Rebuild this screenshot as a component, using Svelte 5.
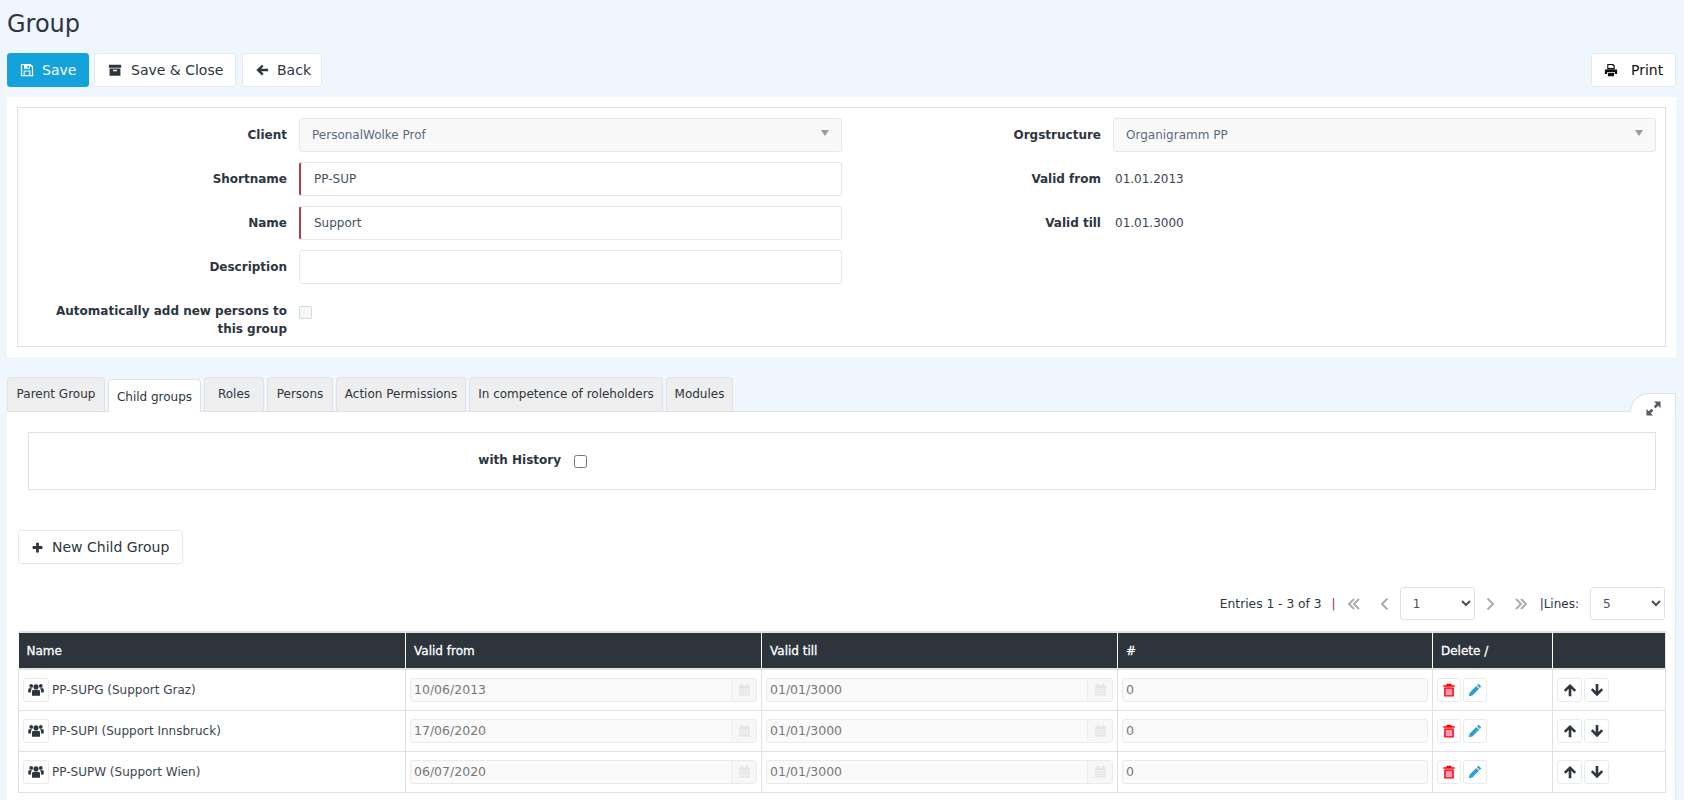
<script>
  const tabs = [
    { label: 'Parent Group', width: 98 },
    { label: 'Child groups', width: 93 },
    { label: 'Roles', width: 60 },
    { label: 'Persons', width: 66 },
    { label: 'Action Permissions', width: 130 },
    { label: 'In competence of roleholders', width: 194 },
    { label: 'Modules', width: 67 }
  ]

  const rows = [
    { name: 'PP-SUPG (Support Graz)', from: '10/06/2013', till: '01/01/3000' },
    { name: 'PP-SUPI (Support Innsbruck)', from: '17/06/2020', till: '01/01/3000' },
    { name: 'PP-SUPW (Support Wien)', from: '06/07/2020', till: '01/01/3000' }
  ]

  // simple filled shapes, all on a 16 x 16 box
  const icons = {
    save: 'M1 1h11l3 3v11H1zM2.400 2.400v11.200h1.700V8.500h7.800v5.100h1.700V4.800L11.500 2.800v3.900H4.500V2.400zM8.300 3v2.600h1.800V3zM5.400 9.800v3.800h5.200V9.800z',
    box: 'M1 2h14v3.400H1zM1.800 6.400h12.400V14.500H1.800zM5.800 7.800v1.500h4.400V7.800z',
    left: 'M8 2l1.800 1.800L7 6.700H15v2.800H7l2.800 2.800L8 14.200 1.500 8.100z',
    print: 'M3.700 1h6.800l1.800 1.800V7H3.700zM5 2.300v3.500h6V3.500H9.700V2.300zM1 7.500h14V12.500h-2.500v-2H3.500v2H1zM4.500 11.500h7V15h-7z',
    plus: 'M6.300 2h3.400v4.300H14v3.400H9.700V14H6.300V9.700H2V6.300h4.300z',
    up: 'M8 1l7 7-2 2-3.500-3.500V15h-3V6.500L3 10 1 8z',
    down: 'M8 15L1 8l2-2 3.500 3.500V1h3v8.500L13 6l2 2z',
    pencil: 'M12 .8l3.200 3.200-1.800 1.800-3.200-3.200zM9.400 3.400l3.200 3.200-7.600 7.600-4.200 1 1-4.200z',
    expand: 'M8.500 .5h7v7l-2.500-2.500-2.800 2.800-2-2 2.800-2.800zM.5 15.500v-7l2.500 2.500 2.800-2.800 2 2-2.800 2.800 2.500 2.500z',
    calendar: 'M1.500 3h2.500V1h2v2h4V1h2v2h2.500v12.500h-13zM3 6.500V8h2.500V6.500zM6.800 6.500V8h2.400V6.500zM10.500 6.500V8H13V6.500zM3 9.300v1.500h2.500V9.300zM6.800 9.300v1.500h2.400V9.300zM10.500 9.300v1.500H13V9.300zM3 12v1.500h2.500V12zM6.800 12v1.500h2.400V12zM10.500 12v1.500H13V12z'
  }
</script>

{#snippet icon(name, cls = '')}
  <svg class="icon {cls}" viewBox="0 0 16 16" aria-hidden="true"><path fill-rule="evenodd" d={icons[name]} /></svg>
{/snippet}

{#snippet users()}
  <svg class="icon" viewBox="0 0 18 16" aria-hidden="true">
    <circle cx="9" cy="5" r="2.9" />
    <circle cx="3.600" cy="4" r="2.100" />
    <circle cx="14.400" cy="4" r="2.100" />
    <path d="M4.500 9.500c.8-.9 2-1.200 4.500-1.200s3.700.3 4.500 1.200v5.500H4.500zM.3 7.500C.8 6.800 1.800 6.700 3.400 6.700c.6 0 1 .1 1.400.3-.7.500-1.300 1.200-1.400 2.300v2H.3zM17.700 7.500c-.5-.7-1.500-.8-3.100-.8-.6 0-1 .1-1.400.3.700.5 1.300 1.200 1.400 2.300v2h3.100z" />
  </svg>
{/snippet}

{#snippet trash()}
  <svg class="icon" viewBox="0 0 16 16" aria-hidden="true">
    <rect x="3.500" y="5" width="9" height="9.500" fill="#f79ab8" />
    <path fill="#f00" fill-rule="evenodd" d="M5.500 .8h5l.7 1.700H14.500v1.800h-13V2.500h3.300zM2.500 5h11v10.500h-11zM4.200 6.600v7.300h7.600V6.600z" />
  </svg>
{/snippet}

<main>
  <h1>Group</h1>

  <div class="toolbar">
    <button class="btn primary">{@render icon('save')}Save</button>
    <button class="btn close">{@render icon('box')}Save &amp; Close</button>
    <button class="btn back">{@render icon('left')}Back</button>
    <button class="btn print">{@render icon('print')}Print</button>
  </div>

  <section class="card">
    <div class="fieldset form">
      <span class="lbl">Client</span>
      <div class="ctl disabled">PersonalWolke Prof<i class="caret"></i></div>
      <span class="lbl">Orgstructure</span>
      <div class="ctl disabled">Organigramm PP<i class="caret"></i></div>

      <span class="lbl">Shortname</span>
      <div class="ctl required">PP-SUP</div>
      <span class="lbl">Valid from</span>
      <div class="plain">01.01.2013</div>

      <span class="lbl">Name</span>
      <div class="ctl required">Support</div>
      <span class="lbl">Valid till</span>
      <div class="plain">01.01.3000</div>

      <span class="lbl">Description</span>
      <div class="ctl"></div>
      <span></span><span></span>

      <span class="lbl multi">Automatically add new persons to this group</span>
      <div class="checkrow"><i class="fakecheck"></i></div>
    </div>
  </section>

  <div class="tabs">
    {#each tabs as t, i}
      <div class="tab" class:active={i === 1} style="width:{t.width}px">{t.label}</div>
    {/each}
    <div class="corner">{@render icon('expand')}</div>
  </div>

  <section class="tabpanel">
    <div class="fieldset history">
      <span class="lbl">with History</span>
      <input type="checkbox" />
    </div>

    <button class="btn newchild">{@render icon('plus')}New Child Group</button>

    <div class="pager">
      <span class="entries">Entries 1 - 3 of 3</span>
      <span class="sep">|</span>
      <svg class="chev first" viewBox="0 0 14 14"><path d="M7 2L2 7l5 5M12 2L7 7l5 5" /></svg>
      <svg class="chev prev" viewBox="0 0 14 14"><path d="M9.500 1.500L4 7l5.500 5.500" /></svg>
      <select><option>1</option></select>
      <svg class="chev next" viewBox="0 0 14 14"><path d="M4.500 1.500L10 7l-5.500 5.500" /></svg>
      <svg class="chev last" viewBox="0 0 14 14"><path d="M2 2l5 5-5 5M7 2l5 5-5 5" /></svg>
      <span class="lines">|Lines:</span>
      <select><option>5</option></select>
    </div>

    <table>
      <colgroup>
        <col style="width:387px" /><col style="width:356px" /><col style="width:356px" />
        <col style="width:315px" /><col style="width:120px" /><col />
      </colgroup>
      <thead>
        <tr><th>Name</th><th>Valid from</th><th>Valid till</th><th>#</th><th>Delete /</th><th></th></tr>
      </thead>
      <tbody>
        {#each rows as r}
          <tr>
            <td>
              <div class="namewrap">
                <span class="mini users">{@render users()}</span>
                <span class="rowname">{r.name}</span>
              </div>
            </td>
            <td><div class="date"><span>{r.from}</span><b>{@render icon('calendar')}</b></div></td>
            <td><div class="date"><span>{r.till}</span><b>{@render icon('calendar')}</b></div></td>
            <td><div class="num">0</div></td>
            <td>
              <div class="acts">
                <span class="mini">{@render trash()}</span>
                <span class="mini">{@render icon('pencil', 'blue')}</span>
              </div>
            </td>
            <td>
              <div class="acts">
                <span class="mini arrow">{@render icon('up')}</span>
                <span class="mini arrow">{@render icon('down')}</span>
              </div>
            </td>
          </tr>
        {/each}
      </tbody>
    </table>
  </section>
</main>

<style>
  :global(body) {
    background: #eff6fe;
  }

  main {
    height: 800px;
    overflow: hidden;
    padding: 0 8px 0 7px;
    box-sizing: border-box;
    font: 12px/18px "DejaVu Sans", Verdana, sans-serif;
    color: #2d3540;
  }

  h1 {
    margin: 0;
    padding-top: 10px;
    height: 53px;
    box-sizing: border-box;
    font-size: 24px;
    line-height: 29px;
    font-weight: 400;
  }

  .icon {
    width: 14px;
    height: 14px;
    fill: currentColor;
    flex: none;
  }

  /* buttons */
  .toolbar {
    display: flex;
    height: 34px;
  }

  .btn {
    display: inline-flex;
    align-items: center;
    height: 34px;
    box-sizing: border-box;
    padding: 0 12px;
    gap: 8px;
    border: 1px solid #e4e9ef;
    border-radius: 3px;
    background: #fff;
    color: #2d3540;
    font: 14px "DejaVu Sans", Verdana, sans-serif;
    white-space: nowrap;
  }

  .primary {
    width: 82px;
    background: #13a2d9;
    border-color: #13a2d9;
    color: #fff;
  }

  .close {
    width: 142px;
    margin-left: 5px;
    padding-left: 13px;
    gap: 9px;
  }

  .back {
    width: 80px;
    margin-left: 6px;
  }

  .print {
    width: 85px;
    margin-left: auto;
    gap: 13px;
    color: #111;
  }

  /* form */
  .card {
    margin-top: 10px;
    padding: 10px;
    background: #fff;
    height: 260px;
    box-sizing: border-box;
  }

  .fieldset {
    box-sizing: border-box;
    border: 1px solid #dfe1e4;
  }

  .form {
    height: 240px;
    padding: 10px 0 0;
    display: grid;
    grid-template-columns: 269px 543px 247px 543px;
    grid-auto-rows: 34px;
    column-gap: 12px;
    row-gap: 10px;
  }

  .lbl {
    font-weight: 700;
    text-align: right;
    align-self: center;
    color: #2d3540;
  }

  .multi {
    align-self: start;
    margin-top: 8px;
    padding-left: 30px;
  }

  .ctl {
    display: flex;
    align-items: center;
    justify-content: space-between;
    box-sizing: border-box;
    height: 34px;
    padding: 0 12px;
    border: 1px solid #e5e7ea;
    border-radius: 3px;
    background: #fff;
    color: #45505f;
  }

  .disabled {
    background: #f9f9fa;
    color: #5a6a80;
  }

  .required {
    border-left: 2px solid #a94442;
    padding-left: 13px;
  }

  .caret {
    width: 0;
    height: 0;
    margin-top: -5px;
    border: 4px solid transparent;
    border-top: 6px solid #999;
    border-bottom: 0;
  }

  .plain {
    align-self: center;
    padding-left: 2px;
    color: #3a4452;
  }

  .checkrow {
    padding-top: 12px;
  }

  .fakecheck {
    display: block;
    width: 11px;
    height: 11px;
    border: 1px solid #d5d7da;
    border-radius: 2px;
    background: #f7f7f7;
  }

  /* tabs */
  .tabs {
    display: flex;
    align-items: flex-end;
    gap: 3px;
    height: 34px;
    margin-top: 20px;
  }

  .tab {
    box-sizing: border-box;
    height: 34px;
    padding-top: 7px;
    text-align: center;
    border: 1px solid #dfe3e8;
    border-bottom: 0;
    border-radius: 4px 4px 0 0;
    background: #eeeeee;
    color: #2d3540;
    white-space: nowrap;
  }

  .tab.active {
    height: 33px;
    padding-top: 8px;
    background: #fff;
    position: relative;
    top: 1px;
  }

  .corner {
    margin-left: auto;
    width: 46px;
    height: 19px;
    box-sizing: border-box;
    background: #fff;
    border: 1px solid #dfe3e8;
    border-bottom: 0;
    border-radius: 20px 0 0 0;
    display: flex;
    justify-content: flex-end;
    padding: 7px 14px 0 0;
    color: #555c64;
    position: relative;
    z-index: 1;
    top: 1px;
  }

  .corner .icon {
    width: 15px;
    height: 15px;
  }

  .tabpanel {
    background: #fff;
    border-top: 1px solid #dfe3e8;
    border-right: 1px solid #e6e9ed;
    padding: 20px 9px 0 11px;
    height: 400px;
    box-sizing: border-box;
  }

  .history {
    display: flex;
    align-items: center;
    height: 58px;
    margin: 0 0 0 10px;
    padding-left: 0;
    width: 1628px;
  }

  .history .lbl {
    width: 532px;
    margin-bottom: 3px;
  }

  .history input {
    margin: 0 0 0 13px;
    width: 13px;
    height: 13px;
  }

  .newchild {
    margin-top: 40px;
    width: 165px;
  }

  .newchild .icon {
    width: 13px;
    height: 13px;
  }

  /* pagination */
  .pager {
    display: flex;
    align-items: center;
    justify-content: flex-end;
    height: 33px;
    margin-top: 23px;
    padding-right: 1px;
    white-space: nowrap;
  }

  .entries {
    font-size: 12.25px;
  }

  .sep {
    margin: 0 11px 0 10px;
    color: #a3264a;
  }

  .chev {
    width: 14px;
    height: 14px;
    fill: none;
    stroke: #a9acb0;
    stroke-width: 2;
    flex: none;
  }

  .first { margin-right: 17px; }
  .prev { margin-right: 8px; }
  .next { margin: 0 17px 0 8px; }
  .last { margin-right: 12px; }

  .lines {
    margin-right: 11px;
  }

  select {
    box-sizing: border-box;
    width: 75px;
    height: 33px;
    padding: 0 0 0 8px;
    border: 1px solid #e0e3e6;
    border-radius: 3px;
    background: #fff;
    color: #45505f;
    font: 12px "DejaVu Sans", Verdana, sans-serif;
  }

  /* table */
  table {
    width: 1648px;
    margin-top: 11px;
    table-layout: fixed;
    border-collapse: collapse;
  }

  th {
    height: 37px;
    padding: 0 8px;
    background: #2d343c;
    border-top: 2px solid #dee2e6;
    border-bottom: 2px solid #dee2e6;
    border-right: 1px solid #fff;
    box-sizing: border-box;
    color: #fff;
    font-weight: 400;
    -webkit-text-stroke: 0.3px #fff;
    text-align: left;
  }

  th:last-child {
    border-right: 1px solid #dee2e6;
  }

  td {
    height: 41px;
    padding: 0 4px;
    box-sizing: border-box;
    border: 1px solid #dee2e6;
  }

  .namewrap {
    display: flex;
    align-items: center;
    gap: 3px;
    white-space: nowrap;
  }

  .rowname {
    color: #3a4452;
  }

  .mini {
    display: inline-flex;
    align-items: center;
    justify-content: center;
    box-sizing: border-box;
    width: 24px;
    height: 24px;
    border: 1px solid #e8eaed;
    border-radius: 3px;
    background: #fff;
  }

  .users {
    width: 26px;
  }

  .users .icon {
    width: 16px;
    height: 15px;
  }

  .arrow {
    width: 25px;
  }

  .acts {
    display: flex;
    gap: 2px;
  }

  .blue { fill: #2b9fd6; }

  .date, .num {
    display: flex;
    align-items: center;
    box-sizing: border-box;
    height: 24px;
    border: 1px solid #e9eaec;
    border-radius: 3px;
    background: #fafafa;
    color: #777;
    font-size: 12.5px;
    padding-left: 3px;
  }

  .date span {
    flex: 1;
  }

  .date b {
    display: flex;
    align-items: center;
    justify-content: center;
    width: 24px;
    height: 22px;
    border-left: 1px solid #eeeeee;
    background: #f7f7f7;
    color: #e4e4e4;
  }

  .date .icon {
    width: 13px;
    height: 13px;
  }
</style>
